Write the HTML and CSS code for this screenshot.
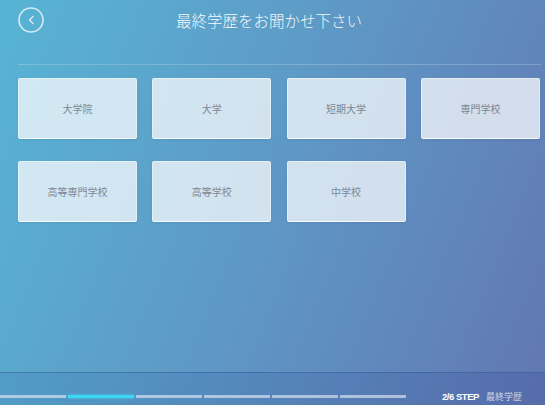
FILE: index.html
```html
<!DOCTYPE html>
<html lang="ja">
<head>
<meta charset="utf-8">
<title>最終学歴</title>
<link rel="stylesheet" href="styles.css">
</head>
<body>
<div class="screen">
  <header class="top">
    <button class="back" type="button" aria-label="戻る">
      <svg width="26" height="26" viewBox="0 0 26 26">
        <circle cx="13" cy="13" r="12" fill="none" stroke="rgba(255,255,255,0.75)" stroke-width="1.6"/>
        <polyline points="15.2,9.3 11.5,13 15.2,16.7" fill="none" stroke="rgba(255,255,255,0.85)" stroke-width="1.2" stroke-linecap="round" stroke-linejoin="round"/>
      </svg>
    </button>
    <h1 class="title">最終学歴をお聞かせ下さい</h1>
  </header>
  <div class="rule"></div>
  <main class="grid">
    <div class="card">大学院</div>
    <div class="card">大学</div>
    <div class="card">短期大学</div>
    <div class="card">専門学校</div>
    <div class="card">高等専門学校</div>
    <div class="card">高等学校</div>
    <div class="card">中学校</div>
  </main>
  <footer class="steps">
    <div class="progress">
      <span class="seg"></span>
      <span class="seg active"></span>
      <span class="seg"></span>
      <span class="seg"></span>
      <span class="seg"></span>
      <span class="seg"></span>
    </div>
    <div class="label"><b class="count">2/6 STEP</b><span class="name">最終学歴</span></div>
  </footer>
</div>
</body>
</html>
```

FILE: styles.css
```css
html, body {
  margin: 0;
  padding: 0;
}
body {
  width: 545px;
  height: 405px;
  overflow: hidden;
  font-family: "Noto Sans CJK JP", "Noto Sans", sans-serif;
}
.screen {
  width: 545px;
  height: 405px;
  display: flex;
  flex-direction: column;
  background: linear-gradient(112deg, #57b4d4 0%, #5e9bc7 45%, #6277b2 100%);
}
.top {
  height: 39px;
  display: grid;
  grid-template-columns: 1fr auto 1fr;
  align-items: center;
  padding: 0 25px 0 18px;
}
.back {
  width: 26px;
  height: 26px;
  padding: 0;
  margin: 0;
  border: 0;
  background: none;
  display: block;
  justify-self: start;
}
.back svg { display: block; }
.title {
  margin: 0;
  font-size: 15.5px;
  font-weight: 300;
  line-height: 20px;
  color: rgba(255, 255, 255, 0.94);
  white-space: nowrap;
}
.rule {
  height: 1px;
  margin: 25px 4px 0 18px;
  background: rgba(255, 255, 255, 0.2);
}
.grid {
  margin-top: 13px;
  padding: 0 5px 0 18px;
  display: grid;
  grid-template-columns: repeat(4, 119px);
  column-gap: 15.3px;
  row-gap: 22px;
}
.card {
  height: 61px;
  box-sizing: border-box;
  display: flex;
  align-items: center;
  justify-content: center;
  background: rgba(255, 255, 255, 0.72);
  border: 1px solid rgba(255, 255, 255, 0.45);
  border-bottom-color: rgba(255, 255, 255, 0.85);
  border-radius: 2px;
  font-size: 10px;
  font-weight: 400;
  color: #7c8795;
  box-shadow: 0 1px 2px rgba(40, 80, 130, 0.15);
}
.steps {
  margin-top: auto;
  height: 33px;
  box-sizing: border-box;
  border-top: 1px solid rgba(50, 95, 145, 0.55);
  background: linear-gradient(90deg, rgba(40, 100, 170, 0.18), rgba(40, 60, 140, 0.2));
  padding-top: 17px;
  display: flex;
  align-items: flex-start;
}
.progress {
  width: 406px;
  margin-top: 5px;
  display: flex;
  gap: 1.6px;
}
.seg {
  flex: 1;
  height: 3px;
  background: rgba(225, 232, 242, 0.65);
}
.seg.active {
  background: #3ad8f3;
  box-shadow: 0 0 3px rgba(70, 225, 255, 0.8);
}
.label {
  margin-left: auto;
  margin-right: 23px;
  display: flex;
  align-items: baseline;
  gap: 7px;
  line-height: 13px;
  white-space: nowrap;
}
.count {
  font-family: "Liberation Sans", Arial, sans-serif;
  font-weight: 700;
  font-size: 9.5px;
  letter-spacing: -0.45px;
  color: #ffffff;
}
.name {
  font-size: 9px;
  color: rgba(255, 255, 255, 0.72);
}
```
